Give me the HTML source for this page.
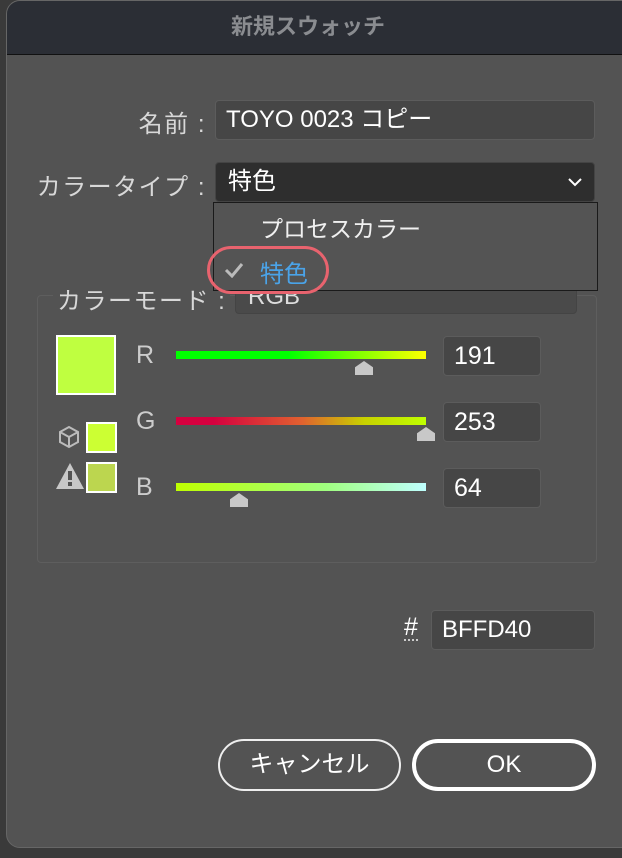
<!DOCTYPE html>
<html><head><meta charset="utf-8">
<style>
*{margin:0;padding:0;box-sizing:border-box}
body{width:622px;height:858px;background:#3a3a3a;position:relative;overflow:hidden;font-family:"Liberation Sans","Noto Sans CJK JP",sans-serif;color:#e8e8e8}
.dlg{position:absolute;left:6px;top:0;width:630px;height:848px;background:#535353;border-radius:14px;overflow:hidden;border:1px solid #666}
.title{position:absolute;left:0;top:0;right:0;height:54px;background:#2b2e35;border-bottom:1px solid #111;text-align:center;font-size:22px;font-weight:bold;color:#8a8c90;line-height:52px;padding-right:26px}
.w{position:absolute;left:-7px;top:0;width:630px;height:848px}
.a{position:absolute}
.lbl{font-size:24px;color:#d8d8d8;letter-spacing:1.5px}
.field{background:#464646;border:1px solid #5c5c5c;border-radius:4px;color:#fff;font-size:24px;padding-left:10px}
.sel{background:#2e2e2e;border:1px solid #444;border-radius:4px;color:#fff;font-size:24px;padding-left:12px}
.bar{position:absolute;height:8px}
.thumb{position:absolute;width:18px;height:14px;background:#c8c8c8;clip-path:polygon(50% 0,100% 45%,100% 100%,0 100%,0 45%)}
.num{position:absolute;width:98px;height:40px;background:#464646;border:1px solid #5c5c5c;border-radius:4px;color:#fff;font-size:25px;padding-left:10px;line-height:38px}
.btn{position:absolute;height:52px;border:2px solid #fff;border-radius:26px;text-align:center;line-height:47px;color:#fff;font-size:24px}
</style></head><body>
<div class="dlg">
<div class="title">新規スウォッチ</div>
<div class="w">
<div class="a lbl" style="left:0;width:206px;text-align:right;top:103px">名前 :</div>
<div class="a field" style="left:215px;top:99px;width:380px;height:40px;line-height:38px">TOYO 0023 コピー</div>
<div class="a lbl" style="left:0;width:206px;text-align:right;top:166px">カラータイプ :</div>
<div class="a sel" style="left:215px;top:161px;width:380px;height:40px;line-height:38px">特色<svg style="position:absolute;right:12px;top:15px" width="14" height="9" viewBox="0 0 14 9" fill="none" stroke="#fff" stroke-width="2"><path d="M1 1L7 7L13 1"/></svg></div>

<div class="a" style="left:37px;top:294px;width:560px;height:268px;border:1px solid #5e5e5e;border-radius:4px"></div>
<div class="a lbl" style="left:53px;top:280px;background:#535353;padding:0 4px">カラーモード :</div>
<div class="a sel" style="left:235px;top:279px;width:342px;height:34px;background:#4a4a4a;line-height:32px;color:#ddd">RGB</div>

<div class="a" style="left:213px;top:201px;width:385px;height:89px;background:#545454;border:1px solid #1a1a1a"></div>
<div class="a" style="left:260px;top:209px;font-size:23px;color:#f0f0f0">プロセスカラー</div>
<svg class="a" style="left:224px;top:261px" width="20" height="16" viewBox="0 0 20 16" fill="none" stroke="#bbb" stroke-width="3"><path d="M2 8L8 14L18 2"/></svg>
<div class="a" style="left:260px;top:253px;font-size:24px;color:#4aa3e8">特色</div>
<div class="a" style="left:207px;top:245px;width:122px;height:48px;border:3px solid #e8636e;border-radius:24px"></div>

<div class="a" style="left:56px;top:334px;width:60px;height:60px;background:#bfff40;border:2px solid #fff"></div>
<div class="a" style="left:86px;top:421px;width:31px;height:31px;background:#ccff33;border:2px solid #fff"></div>
<div class="a" style="left:86px;top:461px;width:31px;height:31px;background:#bcd64f;border:2px solid #fff"></div>
<svg class="a" style="left:57px;top:424px" width="24" height="24" viewBox="0 0 24 24" fill="none" stroke="#bbb" stroke-width="2"><path d="M12 2L21 7V17L12 22L3 17V7Z M3 7L12 12L21 7 M12 12V22"/></svg>
<svg class="a" style="left:55px;top:461px" width="30" height="28" viewBox="0 0 30 28"><path d="M15 1L29 27H1Z" fill="#c8c8c8"/><rect x="13" y="9" width="4" height="9" fill="#535353"/><rect x="13" y="20" width="4" height="4" fill="#535353"/></svg>

<div class="a" style="left:136px;top:340px;font-size:25px;color:#ccc">R</div>
<div class="a" style="left:136px;top:406px;font-size:25px;color:#ccc">G</div>
<div class="a" style="left:136px;top:472px;font-size:25px;color:#ccc">B</div>
<div class="bar" style="left:176px;top:350px;width:250px;background:linear-gradient(90deg,#00ff00 0%,#00ff00 45%,#ffff00 100%)"></div>
<div class="bar" style="left:176px;top:416px;width:250px;background:linear-gradient(90deg,#d6003f 0%,#d6003f 15%,#e06030 50%,#c8d000 75%,#bfff00 100%)"></div>
<div class="bar" style="left:176px;top:482px;width:250px;background:linear-gradient(90deg,#bfff00 0%,#a0ff80 60%,#bfffff 100%)"></div>
<div class="thumb" style="left:355px;top:360px"></div>
<div class="thumb" style="left:417px;top:426px"></div>
<div class="thumb" style="left:230px;top:492px"></div>
<div class="num" style="left:443px;top:335px">191</div>
<div class="num" style="left:443px;top:401px">253</div>
<div class="num" style="left:443px;top:467px">64</div>

<div class="a" style="left:404px;top:614px;font-size:25px;color:#fff;border-bottom:2px dotted #ccc;line-height:24px">#</div>
<div class="a field" style="left:431px;top:609px;width:164px;height:40px;line-height:38px;font-size:24px">BFFD40</div>

<div class="btn" style="left:218px;top:738px;width:183px;border-color:#eee">キャンセル</div>
<div class="btn" style="left:412px;top:738px;width:184px;border-width:4px;line-height:44px">OK</div>
</div>
</div>
</body></html>
